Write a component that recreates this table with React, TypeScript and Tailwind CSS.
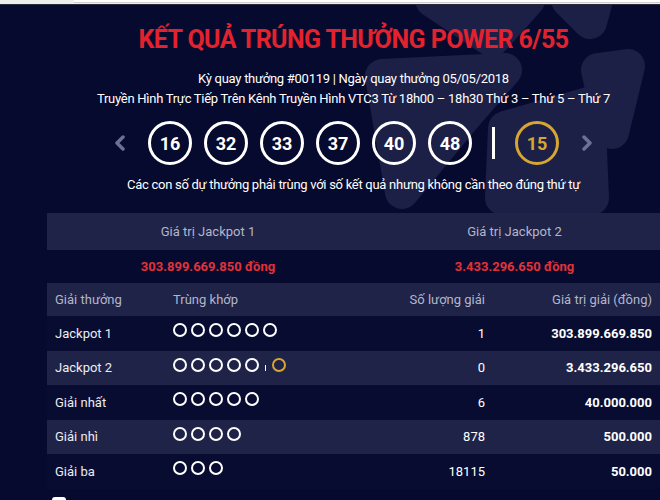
import React from "react";

type Prize = {
  name: string;
  match: number;
  bonus?: boolean;
  count: string;
  value: string;
};

const balls = ["16", "32", "33", "37", "40", "48"];

const prizes: Prize[] = [
  { name: "Jackpot 1", match: 6, count: "1", value: "303.899.669.850" },
  { name: "Jackpot 2", match: 5, bonus: true, count: "0", value: "3.433.296.650" },
  { name: "Giải nhất", match: 5, count: "6", value: "40.000.000" },
  { name: "Giải nhì", match: 4, count: "878", value: "500.000" },
  { name: "Giải ba", match: 3, count: "18115", value: "50.000" },
];

function Chevron({ dir }: { dir: "left" | "right" }) {
  return (
    <svg width="10" height="16" viewBox="0 0 10 16" className="shrink-0">
      <path
        d={dir === "left" ? "M8 2 L2 8 L8 14" : "M2 2 L8 8 L2 14"}
        fill="none"
        stroke="#6c7092"
        strokeWidth="3.5"
        strokeLinecap="round"
        strokeLinejoin="round"
      />
    </svg>
  );
}

function Decor() {
  // soft pinwheel petals behind the header, right side
  return (
    <svg
      className="absolute left-0 top-0 pointer-events-none"
      width="660"
      height="220"
      viewBox="0 0 660 220"
    >
      <g fill="#1c2047" stroke="#1c2047" strokeWidth="34" strokeLinejoin="round">
        <polygon points="432,0 528,0 492,40" />
        <polygon points="568,0 596,0 590,22" />
        <polygon points="598,70 628,66 612,132" />
        <polygon points="382,76 505,70 470,110 402,192" />
        <polygon points="505,128 588,104 592,198 502,198" />
      </g>
    </svg>
  );
}

export default function App() {
  return (
    <div className="relative w-[660px] h-[500px] overflow-hidden bg-[#060a2e] font-['Roboto','Liberation_Sans',sans-serif]">
      {/* browser chrome edge */}
      <div className="relative z-10 h-[5px] bg-[#ededed] border-b border-[#2a2c3a]">
        <div className="ml-[74px] h-[3px] bg-white border-b border-[#cfcfcf]" />
      </div>

      <Decor />

      <div className="relative ml-[47px] w-[613px]">
        <h1 className="pt-[20px] text-center text-[25px] leading-[29px] font-bold text-[#e4222d] tracking-[-0.6px]">
          KẾT QUẢ TRÚNG THƯỞNG POWER 6/55
        </h1>
        <p className="mt-[15px] text-center text-[13px] leading-[20px] text-white tracking-[-0.27px]">
          Kỳ quay thưởng #00119 | Ngày quay thưởng 05/05/2018
        </p>
        <p className="text-center text-[13px] leading-[20px] text-white tracking-[-0.27px]">
          Truyền Hình Trực Tiếp Trên Kênh Truyền Hình VTC3 Từ 18h00 – 18h30 Thứ 3 – Thứ 5 – Thứ 7
        </p>

        <div className="mt-[12px] flex items-center justify-center">
          <Chevron dir="left" />
          <div className="ml-[23px] flex gap-[12px]">
            {balls.map((b) => (
              <div
                key={b}
                className="w-[44px] h-[44px] rounded-full border-[3px] border-white flex items-center justify-center text-white font-bold text-[18px]"
              >
                {b}
              </div>
            ))}
          </div>
          <div className="mx-[20px] w-[3px] h-[32px] bg-white" />
          <div className="w-[44px] h-[44px] rounded-full border-[3px] border-[#d7a531] flex items-center justify-center text-[#d7a531] font-bold text-[18px]">
            15
          </div>
          <div className="ml-[23px]">
            <Chevron dir="right" />
          </div>
        </div>

        <p className="mt-[10px] text-center text-[13px] leading-[20px] text-white tracking-[-0.28px]">
          Các con số dự thưởng phải trùng với số kết quả nhưng không cần theo đúng thứ tự
        </p>

        {/* jackpot values */}
        <div className="mt-[18px] text-[13px]">
          <div className="flex h-[37px] items-center bg-[#1f2347] text-[#b3b6cb]">
            <div className="w-[322px] text-center">Giá trị Jackpot 1</div>
            <div className="flex-1 text-center">Giá trị Jackpot 2</div>
          </div>
          <div className="flex h-[33px] items-center font-bold text-[#e3313a]">
            <div className="w-[322px] text-center">303.899.669.850 đồng</div>
            <div className="flex-1 text-center">3.433.296.650 đồng</div>
          </div>

          {/* prize table */}
          <div className="flex h-[33px] items-center bg-[#1f2347] text-[#b3b6cb]">
            <div className="w-[126px] pl-2">Giải thưởng</div>
            <div className="flex-1">Trùng khớp</div>
            <div className="w-[120px] text-right">Số lượng giải</div>
            <div className="w-[175px] pr-2 text-right">Giá trị giải (đồng)</div>
          </div>
          {prizes.map((p, i) => (
            <div
              key={p.name}
              className={
                "flex h-[34.5px] items-center text-white " +
                (i % 2 === 1 ? "bg-[#1f2347]" : "bg-[#080c31]")
              }
            >
              <div className="w-[126px] pl-2 text-[#ececf2]">{p.name}</div>
              <div className="flex-1 flex items-center gap-[4px] -mt-[6px]">
                {Array.from({ length: p.match }).map((_, k) => (
                  <span
                    key={k}
                    className="w-[14px] h-[14px] rounded-full border-2 border-white"
                  />
                ))}
                {p.bonus && (
                  <>
                    <span className="mx-[2px] mt-[6px] w-[1px] h-[6px] bg-white" />
                    <span className="w-[14px] h-[14px] rounded-full border-2 border-[#d7a531]" />
                  </>
                )}
              </div>
              <div className="w-[120px] text-right">{p.count}</div>
              <div className="w-[175px] pr-2 text-right font-bold">{p.value}</div>
            </div>
          ))}
        </div>

        <div className="mt-[8px] ml-[5px] w-[14px] h-[14px] rounded-[3px] bg-white" />
      </div>
    </div>
  );
}
